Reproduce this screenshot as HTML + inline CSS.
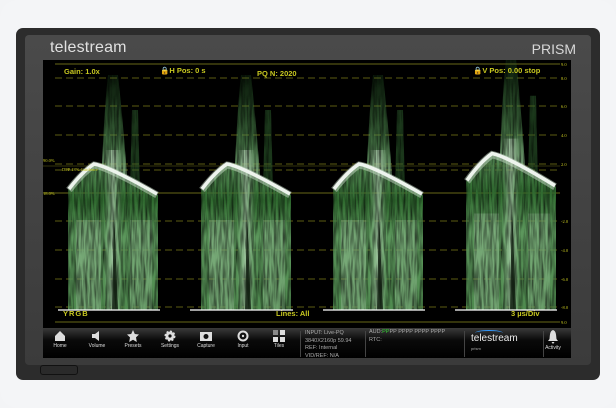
<!DOCTYPE html>
<html><head><meta charset="utf-8"><style>
*{margin:0;padding:0;box-sizing:border-box}
body{width:616px;height:408px;background:#f3f4f6;font-family:"Liberation Sans",sans-serif;position:relative;overflow:hidden}
.card{position:absolute;left:0;top:0;width:616px;height:408px;background:#f4f5f7;border-radius:18px}
.dev{position:absolute;left:16px;top:28px;width:584px;height:352px;background:#2c2c2c;border-radius:7px}
.bez{position:absolute;left:25px;top:35px;width:566px;height:330px;background:linear-gradient(#4a4a4a,#3b3b3b);border-radius:4px}
.logo{position:absolute;left:50px;top:39px;color:#e0e0e0;font-size:16px;letter-spacing:0.2px}
.prism{position:absolute;right:40px;top:41px;color:#d8d8d8;font-size:14px}
.scr{position:absolute;left:43px;top:60px;width:528px;height:268px;background:#000}
.tb{position:absolute;left:43px;top:328px;width:528px;height:30px;background:linear-gradient(#3a3a3a,#0a0a0a 40%,#000)}
.ic{position:absolute;top:2px;width:34px;text-align:center;color:#ddd;font-size:5px}
.ic svg{display:block;margin:0 auto 1px}
.info{position:absolute;color:#aaa;font-size:5.5px;line-height:7.5px}
.bot{position:absolute;left:40px;top:365px;width:38px;height:10px;border:1px solid #111;border-radius:3px;background:#2a2a2a}
</style></head><body>
<div class="card"></div>
<div class="dev"></div>
<div class="bez"></div>
<div class="logo">telestream</div>
<div class="prism">PRISM</div>
<div class="scr">
<svg width="528" height="268" viewBox="43 60 528 268" xmlns="http://www.w3.org/2000/svg">
<defs>
<filter id="n" x="-10%" y="-10%" width="120%" height="120%"><feTurbulence type="fractalNoise" baseFrequency="0.45 0.04" numOctaves="2" seed="3" result="t"/><feColorMatrix in="t" type="matrix" values="0 0 0 0 0  0 0 0 0 0  0 0 0 0 0  0 0 0 -1.3 1.45" result="a"/><feComposite in="SourceGraphic" in2="a" operator="in"/></filter>
<linearGradient id="body" x1="0" y1="0" x2="0" y2="1"><stop offset="0" stop-color="#5a8f5a"/><stop offset="0.25" stop-color="#2f6a2f"/><stop offset="0.5" stop-color="#5c975c"/><stop offset="1" stop-color="#4f8a4f"/></linearGradient>
<linearGradient id="pl" x1="0" y1="0" x2="0" y2="1"><stop offset="0" stop-color="#2e6a2e" stop-opacity="0.25"/><stop offset="0.6" stop-color="#5a985a" stop-opacity="0.7"/><stop offset="1" stop-color="#a0c8a0" stop-opacity=".9"/></linearGradient>
<linearGradient id="hl" x1="0" y1="0" x2="1" y2="0"><stop offset="0" stop-color="#b8dab8" stop-opacity="0"/><stop offset=".5" stop-color="#cfe8cf" stop-opacity=".6"/><stop offset="1" stop-color="#b8dab8" stop-opacity="0"/></linearGradient>
<g id="blk">
<g filter="url(#n)">
<path d="M33,20 Q36,-60 40,-95 L50,-95 Q56,-40 60,20Z" fill="url(#pl)"/>
<path d="M62,20 L64,-60 L70,-60 L72,20Z" fill="#2d5e2d" opacity=".6"/>
<path d="M0,20 Q14,2 26,-6 Q40,-4 90,25 L90,140 L0,140Z" fill="url(#body)"/>
<rect x="36" y="-20" width="18" height="160" fill="url(#hl)"/>
<rect x="8" y="50" width="25" height="90" fill="#cfe8cf" opacity=".25"/>
<rect x="62" y="50" width="22" height="90" fill="#cfe8cf" opacity=".22"/>
</g>
<path d="M44,140 L46,40 L50,140Z" fill="#061206" opacity=".8"/>
<path d="M1,20 Q14,3 26,-5 Q40,-3 89,25" stroke="#c8dcc8" stroke-width="7" fill="none" opacity=".5"/>
<path d="M1,19 Q14,2 26,-6 Q40,-4 89,24" stroke="#eef4ee" stroke-width="3.5" fill="none"/>
</g>
</defs>
<line x1="55" y1="64" x2="560" y2="64" stroke="#8a8a20" stroke-width=".8"/>
<line x1="55" y1="322" x2="560" y2="322" stroke="#8a8a20" stroke-width=".8"/>
<g stroke="#7a7a18" stroke-width=".8" stroke-dasharray="7,4">
<line x1="55" y1="78" x2="560" y2="78"/><line x1="55" y1="106" x2="560" y2="106"/><line x1="55" y1="135" x2="560" y2="135"/><line x1="55" y1="164" x2="560" y2="164"/><line x1="55" y1="221" x2="560" y2="221"/><line x1="55" y1="250" x2="560" y2="250"/><line x1="55" y1="279" x2="560" y2="279"/><line x1="55" y1="307" x2="560" y2="307"/><line x1="55" y1="170" x2="560" y2="170"/>
</g>
<line x1="43" y1="193" x2="560" y2="193" stroke="#8a8a20" stroke-width=".8"/>
<line x1="43" y1="166" x2="560" y2="166" stroke="#6a6a18" stroke-width=".6"/>
<use href="#blk" transform="translate(68,170)"/>
<use href="#blk" transform="translate(201,170)"/>
<use href="#blk" transform="translate(333,170)"/>
<use href="#blk" transform="translate(466,160) scale(1,1.07)"/>
<g stroke="#fff" stroke-width="1.2"><line x1="58" y1="310" x2="160" y2="310"/><line x1="190" y1="310" x2="293" y2="310"/><line x1="323" y1="310" x2="425" y2="310"/><line x1="455" y1="310" x2="557" y2="310"/></g>
<g fill="#c8c820" font-size="4.5" font-family="Liberation Serif,serif"><text x="561" y="66">9.0</text><text x="561" y="80">8.0</text><text x="561" y="108">6.0</text><text x="561" y="137">4.0</text><text x="561" y="166">2.0</text><text x="561" y="223">-2.0</text><text x="561" y="252">-4.0</text><text x="561" y="281">-6.0</text><text x="561" y="309">-8.0</text><text x="561" y="324">9.0</text>
<text x="43" y="162">90.0%</text><text x="62" y="171">DPP 18% Guidance</text><text x="43" y="195">18.0%</text></g>
<g fill="#c8c820" font-size="7.5" font-weight="bold"><text x="64" y="74">Gain: 1.0x</text><text x="160" y="73">🔒H Pos: 0 s</text><text x="257" y="76">PQ N: 2020</text><text x="473" y="73">🔒V Pos: 0.00 stop</text><text x="276" y="316">Lines: All</text><text x="511" y="316">3 µs/Div</text><text x="63" y="316" letter-spacing="1">YRGB</text></g>
</svg>
</div>
<div class="tb">
<div class="ic" style="left:0"><svg width="12" height="12"><path d="M1,6 L6,1 L11,6 V11 H1Z" fill="#ddd"/></svg>Home</div>
<div class="ic" style="left:37px"><svg width="12" height="12"><path d="M1,4 H4 L8,1 V11 L4,8 H1Z" fill="#ddd"/></svg>Volume</div>
<div class="ic" style="left:73px"><svg width="12" height="12"><path d="M6,0 L7.8,4 L12,4.5 L9,7.4 L9.8,12 L6,9.8 L2.2,12 L3,7.4 L0,4.5 L4.2,4Z" fill="#ddd"/></svg>Presets</div>
<div class="ic" style="left:110px"><svg width="12" height="12"><circle cx="6" cy="6" r="4.5" fill="#ddd" stroke="#ddd" stroke-width="2" stroke-dasharray="2,1.5"/><circle cx="6" cy="6" r="1.6" fill="#111"/></svg>Settings</div>
<div class="ic" style="left:146px"><svg width="12" height="12"><rect x="0" y="2" width="12" height="9" fill="#ddd"/><circle cx="6" cy="6.5" r="2.5" fill="#111"/></svg>Capture</div>
<div class="ic" style="left:183px"><svg width="12" height="12"><circle cx="6" cy="6" r="5.5" fill="#ddd"/><circle cx="6" cy="6" r="3.5" fill="#111"/><circle cx="6" cy="6" r="1.2" fill="#ddd"/></svg>Input</div>
<div class="ic" style="left:219px"><svg width="12" height="12"><rect x="0" y="0" width="5" height="5" fill="#888"/><rect x="7" y="0" width="5" height="5" fill="#ddd"/><rect x="0" y="7" width="5" height="5" fill="#ddd"/><rect x="7" y="7" width="5" height="5" fill="#ddd"/></svg>Tiles</div>
<div style="position:absolute;left:257px;top:3px;width:1px;height:26px;background:#444"></div>
<div class="info" style="left:262px;top:2px">INPUT: Live-PQ<br>3840X2160p 59.94<br>REF: Internal<br>VID/REF: N/A</div>
<div style="position:absolute;left:322px;top:3px;width:1px;height:26px;background:#444"></div>
<div class="info" style="left:326px;top:1px">AUD:<span style="color:#3c3">PP</span>PP PPPP PPPP PPPP<br>RTC:</div>
<div style="position:absolute;left:421px;top:3px;width:1px;height:26px;background:#444"></div>
<div style="position:absolute;left:428px;top:5px;color:#eee;font-size:10px">telestream</div>
<div style="position:absolute;left:428px;top:18px;color:#aaa;font-size:4px">prism</div>
<div style="position:absolute;left:432px;top:2px;width:28px;height:6px;border-top:1.5px solid #39f;border-radius:50%"></div>
<div style="position:absolute;left:500px;top:3px;width:1px;height:26px;background:#444"></div>
<div class="ic" style="left:493px"><svg width="12" height="14"><path d="M6,0 C3,1 3,4 2.5,9 L1,11 H11 L9.5,9 C9,4 9,1 6,0Z M4.5,12 H7.5 L6,14Z" fill="#ddd"/></svg>Activity</div>
</div>
<div class="bot"></div>
</body></html>
